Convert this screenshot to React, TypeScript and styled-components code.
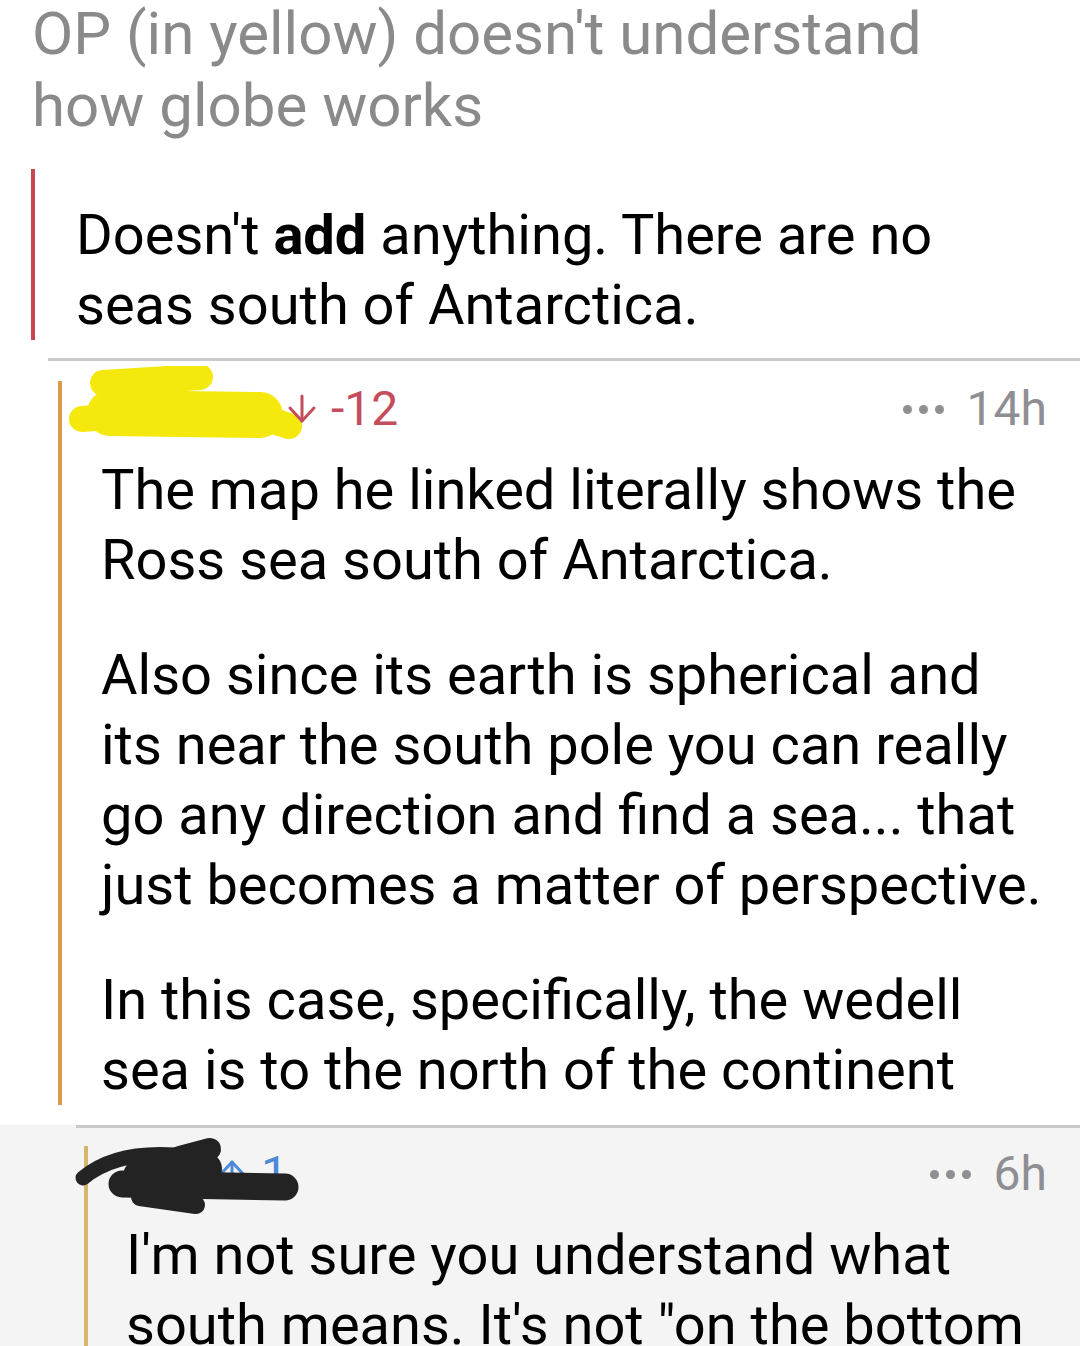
import React from "react";
import styled, { createGlobalStyle } from "styled-components";

const GlobalStyle = createGlobalStyle`
  html, body { margin: 0; padding: 0; background: #ffffff; }
  body {
    font-family: Roboto, "Noto Sans", "Liberation Sans", sans-serif;
    -webkit-font-smoothing: antialiased;
  }
  * { box-sizing: border-box; }
`;

const Page = styled.main`
  width: 1080px;
  min-height: 1346px;
  display: flex;
  flex-direction: column;
  background: #ffffff;
  overflow: hidden;
`;

const Title = styled.h1`
  margin: -2px 0 0;
  padding: 0 32px 0 32px;
  font-size: 60px;
  line-height: 72px;
  font-weight: 400;
  color: #8a8a8a;
`;

const Block = styled.section<{ $bg?: string; $grow?: boolean }>`
  background: ${(p) => p.$bg ?? "#ffffff"};
  flex: ${(p) => (p.$grow ? "1 0 auto" : "0 0 auto")};
`;

const Divider = styled.div<{ $inset: number }>`
  height: 3px;
  margin-left: ${(p) => p.$inset}px;
  background: #c9c9cb;
`;

const Row = styled.div<{ $barX: number; $top: number; $bottom: number }>`
  display: flex;
  padding: ${(p) => `${p.$top}px 33px ${p.$bottom}px ${p.$barX}px`};
`;

const Bar = styled.div<{ $color: string }>`
  flex: 0 0 4px;
  align-self: stretch;
  background: ${(p) => p.$color};
`;

const Content = styled.div<{ $gap: number }>`
  flex: 1;
  min-width: 0;
  padding-left: ${(p) => p.$gap}px;
`;

const Header = styled.div`
  position: relative;
  display: flex;
  align-items: center;
  height: 56px;
  font-size: 48px;
  line-height: 56px;
`;

const UserSlot = styled.span<{ $w: number }>`
  flex: 0 0 ${(p) => p.$w}px;
  height: 40px;
`;

const Vote = styled.span<{ $color: string; $onTop?: boolean }>`
  position: relative;
  z-index: ${(p) => (p.$onTop ? 3 : 1)};
  display: flex;
  align-items: center;
  gap: 14px;
  margin-left: 14px;
  color: ${(p) => p.$color};
  svg { flex: none; }
`;

const Meta = styled.div`
  margin-left: auto;
  display: flex;
  align-items: center;
  gap: 23px;
  color: #8e8e93;
`;

const Dots = styled.span`
  display: flex;
  gap: 7px;
  span {
    width: 9px;
    height: 9px;
    border-radius: 50%;
    background: #8e8e93;
  }
`;

const Body = styled.div<{ $top: number }>`
  margin-top: ${(p) => p.$top}px;
  font-size: 56px;
  line-height: 70px;
  color: #000000;
  p { margin: 0; }
  p + p { margin-top: 45px; }
  b { font-weight: 700; }
`;

const Scribble = styled.svg<{ $left: number; $top: number }>`
  position: absolute;
  left: ${(p) => p.$left}px;
  top: ${(p) => p.$top}px;
  z-index: 2;
  pointer-events: none;
`;

const Arrow: React.FC<{ dir: "up" | "down"; color: string }> = ({ dir, color }) => (
  <svg width="30" height="30" viewBox="0 0 30 30" fill="none" stroke={color} strokeWidth="3" strokeLinecap="round" strokeLinejoin="round">
    {dir === "down" ? (
      <>
        <path d="M15 2 V27" />
        <path d="M3 14 L15 27 L27 14" />
      </>
    ) : (
      <>
        <path d="M15 28 V3" />
        <path d="M3 16 L15 3 L27 16" />
      </>
    )}
  </svg>
);

const YellowScribble = () => (
  <Scribble $left={-38} $top={-15} width="250" height="85" viewBox="0 0 250 85" fill="none" strokeLinecap="round" stroke="#f5e80c">
    <path d="M40 17 L137 11" strokeWidth="26" />
    <path d="M19 53 L47 51" strokeWidth="26" />
    <path d="M47 47 L197 49" strokeWidth="46" />
    <path d="M197 51 L226 60" strokeWidth="26" />
  </Scribble>
);

const BlackScribble = () => (
  <Scribble $left={-58} $top={-20} width="240" height="100" viewBox="0 0 240 100" fill="none" strokeLinecap="round" strokeLinejoin="round" stroke="#232323">
    <path d="M15 52 Q47 25 107 29 L144 23" strokeWidth="15" />
    <path d="M112 31 L142 23" strokeWidth="22" />
    <path d="M72 50 L137 43" strokeWidth="34" />
    <path d="M54 58 L217 61" strokeWidth="27" />
    <path d="M72 71 L128 79" strokeWidth="18" />
  </Scribble>
);

type CommentProps = {
  bg?: string;
  grow?: boolean;
  dividerInset: number;
  barX: number;
  barColor: string;
  gap: number;
  top: number;
  bottom: number;
  userWidth: number;
  scribble: React.ReactNode;
  voteOnTop?: boolean;
  vote: { dir: "up" | "down"; color: string; value: string };
  age: string;
  children: React.ReactNode;
};

const Comment: React.FC<CommentProps> = ({
  bg, grow, dividerInset, barX, barColor, gap, top, bottom, userWidth, scribble, voteOnTop, vote, age, children,
}) => (
  <Block $bg={bg} $grow={grow}>
    <Divider $inset={dividerInset} />
    <Row $barX={barX} $top={top} $bottom={bottom}>
      <Bar $color={barColor} />
      <Content $gap={gap}>
        <Header>
          <UserSlot $w={userWidth} />
          {scribble}
          <Vote $color={vote.color} $onTop={voteOnTop}>
            <Arrow dir={vote.dir} color={vote.color} />
            {vote.value}
          </Vote>
          <Meta>
            <Dots><span /><span /><span /></Dots>
            {age}
          </Meta>
        </Header>
        <Body $top={18}>{children}</Body>
      </Content>
    </Row>
  </Block>
);

export default function App() {
  return (
    <>
      <GlobalStyle />
      <Page>
        <Title>OP (in yellow) doesn't understand how globe works</Title>
        <Block>
          <Row $barX={31} $top={27} $bottom={18}>
            <Bar $color="#c8464f" />
            <Content $gap={41}>
              <Body $top={31}>
                <p>Doesn't <b>add</b> anything. There are no seas south of Antarctica.</p>
              </Body>
            </Content>
          </Row>
        </Block>
        <Comment
          dividerInset={48}
          barX={58}
          barColor="#d99a4b"
          gap={39}
          top={20}
          bottom={20}
          userWidth={172}
          scribble={<YellowScribble />}
          voteOnTop
          vote={{ dir: "down", color: "#c44d5c", value: "-12" }}
          age="14h"
        >
          <p>The map he linked literally shows the Ross sea south of Antarctica.</p>
          <p>Also since its earth is spherical and its near the south pole you can really go any direction and find a sea... that just becomes a matter of perspective.</p>
          <p>In this case, specifically, the wedell sea is to the north of the continent</p>
        </Comment>
        <Comment
          bg="#f4f4f4"
          grow
          dividerInset={76}
          barX={84}
          barColor="#d6b66c"
          gap={38}
          top={18}
          bottom={20}
          userWidth={77}
          scribble={<BlackScribble />}
          vote={{ dir: "up", color: "#4a8ad6", value: "1" }}
          age="6h"
        >
          <p>I'm not sure you understand what south means. It's not "on the bottom</p>
        </Comment>
      </Page>
    </>
  );
}
